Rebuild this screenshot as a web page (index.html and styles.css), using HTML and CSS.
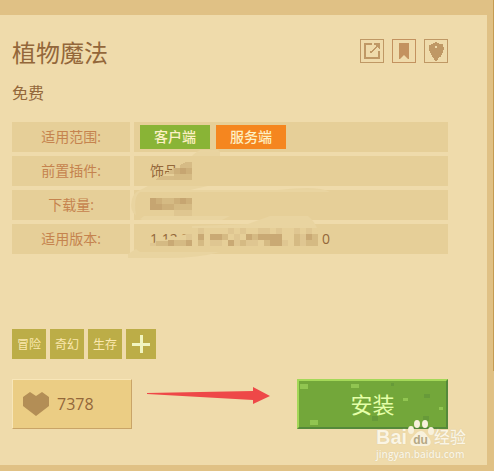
FILE: index.html
```html
<!DOCTYPE html>
<html lang="zh-CN">
<head>
    <meta charset="UTF-8">
    <meta name="viewport" content="width=device-width, initial-scale=1.0">
    <title>植物魔法</title>
    <link rel="stylesheet" href="styles.css">
</head>
<body>
    <main class="card">
        <header class="card-header">
            <h1>植物魔法</h1>
            <div class="actions">
                <button class="icon-button" type="button" aria-label="分享">
                    <svg width="22" height="22" viewBox="0 0 22 22" shape-rendering="crispEdges">
                        <path fill="#bf9865" d="M3 3h8v2H5v12h12v-6h2v8H3zM13 3h6v6h-1V8h-1V7h-1v1h-1v1h-1v1h-1v1h-1v1h-1v1H9v-2h2v-1h1V9h1V8h1V7h1V5h-2z"/>
                    </svg>
                </button>
                <button class="icon-button icon-button-warm" type="button" aria-label="收藏">
                    <svg width="22" height="22" viewBox="0 0 22 22">
                        <path fill="#c3925f" d="M6 3h10v16h-1l-4-4-4 4H6z"/>
                    </svg>
                </button>
                <button class="icon-button" type="button" aria-label="举报">
                    <svg width="22" height="22" viewBox="0 0 22 22">
                        <path fill="#bf9865" fill-rule="evenodd" d="M10 2h2v1h2v1h4v3h1v3h-1v3h-1v2h-1v2h-2v1h-1v2h-1v1h-2v-1H9v-2H8v-1H7v-2H6v-2H5v-2H4V5h2V4h2V3h2zM10 6v2h2V6z"/>
                    </svg>
                </button>
            </div>
        </header>
        <p class="price">免费</p>

        <div class="info">
            <table class="info-table">
                <tr>
                    <th scope="row">适用范围:</th>
                    <td class="badges"><span class="badge badge-client">客户端</span><span class="badge badge-server">服务端</span></td>
                </tr>
                <tr>
                    <th scope="row">前置插件:</th>
                    <td>饰品</td>
                </tr>
                <tr>
                    <th scope="row">下载量:</th>
                    <td></td>
                </tr>
                <tr>
                    <th scope="row">适用版本:</th>
                    <td><span class="versions"><span>1.12.2</span><span>0</span></span></td>
                </tr>
            </table>
            <!-- blurred-out values -->
            <svg class="mosaic" width="210" height="115" viewBox="0 0 210 115" aria-hidden="true">
                <g fill="#e9d4a0">
                    <path d="M66 9L72 5H90L92 7V11H64z"/>
                    <path d="M10 46L20 41H80L62 45H150Q190 40 202 47H12Q5 52 8 70Q1 66 4 54Q6 48 10 46z"/>
                    <path d="M12 74L16 71H102L94 75H14z"/>
                    <path d="M64 81L120 79L142 71H180Q186 76 189 83H64z"/>
                    <path d="M0 109L8 104L12 107H92Q70 113 40 113H-2z"/>
                </g>
                <path fill="#e6cf98" d="M27 35L58 17H64V35z"/>
                <path fill="#e6cf98" d="M22 101V99L62 88V83H189L194 101z"/>
                <g shape-rendering="crispEdges">
                    <path fill="#d6bb85" d="M52 20L58 17H64V23H52zM40 27L46 23H52V29H38zM28 34L34 31H46V35H28z"/>
                    <path fill="#c6a571" d="M52 23h6v6h-6zM22 53h6v12h-6zM28 59h6v6h-6zM52 53h6v6h-6z"/>
                    <path fill="#cdaf79" d="M46 23h6v6h-6zM58 23h6v6h-6zM28 53h6v6h-6zM34 59h12v6H34zM46 53h6v6h-6zM58 53h6v6h-6z"/>
                    <path fill="#d5ba83" d="M34 53h12v6H34zM46 59h18v6H46zM46 29h18v6H46z"/>
                    <path fill="#dfc690" d="M46 65h18v6H46z"/>
                    <path fill="#dfc691" d="M70 83h6v6h-6zM100 83h6v6h-6zM112 83h6v6h-6zM130 83h12v6h-12zM148 83h6v6h-6zM166 83h6v6h-6zM178 83h6v6h-6zM22 98h6v3h-6zM58 89h6v6h-6zM106 89h6v12h-6zM82 95h12v6H82zM118 95h12v6h-12zM154 95h6v6h-6zM172 89h6v12h-6z"/>
                    <path fill="#d5ba83" d="M28 96h12v5H28zM46 95h12v6H46zM70 95h6v6h-6zM94 89h6v6h-6zM112 95h6v6h-6zM124 89h6v6h-6zM136 95h6v6h-6zM166 89h6v12h-6zM184 89h6v12h-6zM178 95h6v6h-6z"/>
                    <path fill="#c9a974" d="M40 95h6v6h-6zM58 95h6v6h-6zM70 89h6v6h-6zM82 89h12v6H82zM100 95h6v6h-6zM118 89h6v6h-6zM130 89h24v6h-24zM142 95h12v6h-12zM178 89h6v6h-6z"/>
                </g>
            </svg>
        </div>

        <div class="tags">
            <a class="tag" href="#">冒险</a>
            <a class="tag" href="#">奇幻</a>
            <a class="tag" href="#">生存</a>
            <button class="tag tag-add" type="button" aria-label="添加标签">
                <svg width="18" height="18" viewBox="0 0 18 18" shape-rendering="crispEdges">
                    <path fill="#f1f5c0" d="M8 0h3v8h7v3h-7v7H8v-7H0V8h8z"/>
                </svg>
            </button>
        </div>

        <div class="bottom">
            <button class="like" type="button">
                <svg width="26" height="24" viewBox="0 0 26 24">
                    <path fill="#b38e56" d="M0 5L7 0l6 4 6-4 7 5v9L13 24 0 14z"/>
                </svg>
                <span>7378</span>
            </button>
            <svg class="arrow" width="124" height="18" viewBox="0 0 124 18" aria-hidden="true">
                <path fill="#ee4848" d="M0 6L106 4V0l17 9-17 8v-4L0 7z"/>
            </svg>
            <button class="install" type="button">
                <svg class="install-pixels" width="147" height="46" viewBox="0 0 147 46" shape-rendering="crispEdges" aria-hidden="true">
                    <path fill="#91c551" d="M1 3h8v5H1zM52 3h8v4h-8zM104 17h5v3h-5zM140 26h4v3h-4zM11 39h8v5h-8z"/>
                    <path fill="#679a39" d="M92 2h3v3h-3zM125 13h6v4h-6zM73 35h6v5h-6zM124 35h6v5h-6z"/>
                </svg>
                <span>安装</span>
            </button>
        </div>

        <div class="watermark">
            <div class="watermark-logo">
                <span class="watermark-bai">Bai</span>
                <span class="watermark-paw">
                    <svg width="26" height="28" viewBox="0 0 26 28" aria-hidden="true">
                        <g fill="#f8f1dc">
                            <ellipse cx="3" cy="11" rx="3" ry="4"/>
                            <ellipse cx="9" cy="5" rx="3" ry="4"/>
                            <ellipse cx="17" cy="5" rx="3" ry="4"/>
                            <ellipse cx="23" cy="12" rx="3" ry="4"/>
                            <path d="M13 12c4 0 5 4 8 7 3 4 2 8-3 8H7c-5 0-6-4-3-8 3-3 5-7 9-7z"/>
                        </g>
                    </svg>
                    <span>du</span>
                </span>
                <span class="watermark-cn">经验</span>
            </div>
            <div class="watermark-url">jingyan.baidu.com</div>
        </div>
    </main>
    <div class="scroll-edge"></div>
</body>
</html>
```
FILE: styles.css
```css
:root {
    --page: #e0c185;
    --card: #efdbab;
    --row: #e6cf98;
    --brown: #93673a;
    --label: #c5834e;
    --olive: #bcad47;
    --font-family: "Open Sans", "Noto Sans CJK SC", sans-serif;
}
* {
    box-sizing: border-box;
}
body {
    margin: 0;
    padding: 15px 7px 6px 0;
    background: var(--page);
    color: var(--brown);
    font-family: var(--font-family);
    font-size: 14px;
}
button {
    margin: 0;
    padding: 0;
    font-family: inherit;
    cursor: pointer;
}
.card {
    position: relative;
    padding: 24px 39px 36px 12px;
    background: var(--card);
}
.card-header {
    display: flex;
    justify-content: space-between;
    align-items: flex-start;
}
h1 {
    margin: 0;
    font-size: 24px;
    font-weight: 400;
    line-height: 28px;
}
.actions {
    display: flex;
    gap: 8px;
}
.icon-button {
    display: flex;
    width: 24px;
    height: 24px;
    border: 1px solid #bf9865;
    background: none;
}
.icon-button-warm {
    border-color: #c3925f;
}
.price {
    margin: 14px 0 17px;
    font-size: 16px;
    line-height: 24px;
}

/* info rows */
.info {
    display: flow-root;
    position: relative;
    margin-bottom: 75px;
}
.info-table {
    width: calc(100% + 8px);
    margin: -4px;
    border-spacing: 4px;
    table-layout: fixed;
}
.info-table th,
.info-table td {
    height: 30px;
    padding: 0;
    background: var(--row);
    line-height: 20px;
}
.info-table th {
    width: 118px;
    color: var(--label);
    font-weight: 400;
}
.info-table td {
    padding-left: 16px;
}
.info-table .badges {
    padding-left: 6px;
    font-size: 0;
}
.badge {
    display: inline-block;
    width: 70px;
    margin-right: 6px;
    color: #fdf0c4;
    font-size: 14px;
    font-weight: 500;
    line-height: 24px;
    text-align: center;
    vertical-align: middle;
}
.badge-client {
    background: #89b436;
}
.badge-server {
    background: #f5861f;
}
.versions {
    display: flex;
    justify-content: space-between;
    width: 180px;
}
.mosaic {
    position: absolute;
    top: 23px;
    left: 116px;
}

.tags {
    display: flex;
    gap: 4px;
    margin-bottom: 20px;
}
.tag {
    display: flex;
    justify-content: center;
    align-items: center;
    width: 34px;
    height: 30px;
    background: var(--olive);
    color: #fbe8ae;
    font-size: 12px;
    text-decoration: none;
}
.tag-add {
    width: 30px;
    border: 0;
}

.bottom {
    display: flex;
    align-items: center;
}
.like {
    display: flex;
    align-items: center;
    gap: 8px;
    width: 120px;
    height: 50px;
    padding-left: 10px;
    border: 1px solid;
    border-color: #f8e6b8 #c9a467 #c9a467 #f8e6b8;
    background: #ebcd84;
    color: var(--brown);
    font-size: 16px;
}
.arrow {
    margin: 8px auto 0 15px;
    align-self: flex-start;
}
.install {
    position: relative;
    width: 151px;
    height: 50px;
    border: 2px solid;
    border-color: #a4d858 #55893a #55893a #a4d858;
    background: #73a73a;
    color: #e5ffa8;
    font-size: 22px;
    line-height: 32px;
}
.install span {
    position: relative;
}
.install-pixels {
    position: absolute;
    top: 0;
    left: 0;
}

/* watermark */
.watermark {
    position: absolute;
    right: 21px;
    bottom: 4px;
    width: 90px;
    color: #fbf5e4;
    text-shadow: 0 0 1px #d0c09a;
}
.watermark-logo {
    display: flex;
    align-items: flex-end;
    justify-content: space-between;
    height: 28px;
}
.watermark-bai {
    font-family: "Liberation Sans", sans-serif;
    font-size: 20px;
    font-weight: 700;
    line-height: 20px;
}
.watermark-paw {
    position: relative;
    height: 28px;
}
.watermark-paw svg {
    display: block;
}
.watermark-paw span {
    position: absolute;
    bottom: 0;
    left: 0;
    width: 100%;
    color: #b5a884;
    font-family: "Liberation Sans", sans-serif;
    font-size: 12px;
    font-weight: 700;
    line-height: 14px;
    text-align: center;
    text-shadow: none;
}
.watermark-cn {
    font-size: 16px;
    font-weight: 500;
    line-height: 20px;
}
.watermark-url {
    font-size: 10px;
    font-weight: 600;
    line-height: 14px;
    white-space: nowrap;
}

.scroll-edge {
    position: absolute;
    top: 0;
    right: 0;
    width: 1px;
    height: 371px;
    background: #c59b51;
}

@media (max-width: 420px) {
    .arrow { display: none; }
    .bottom { justify-content: space-between; }
}
```
